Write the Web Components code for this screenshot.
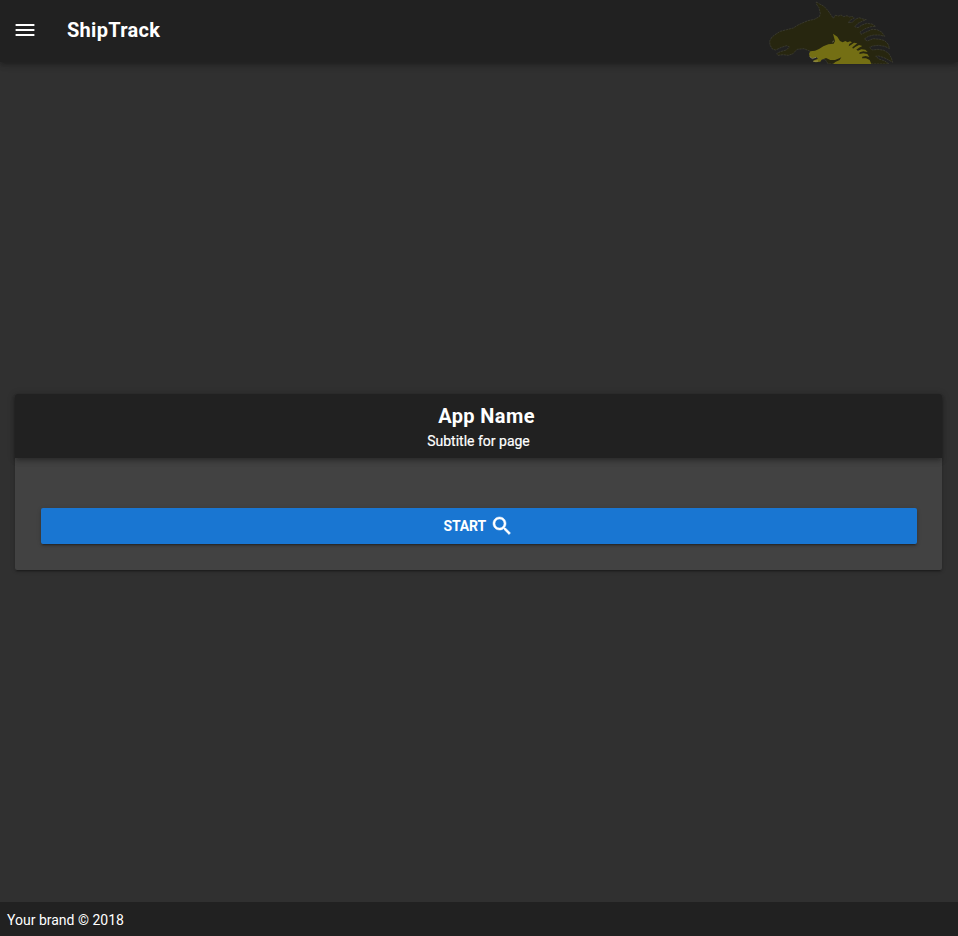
<!DOCTYPE html>
<html lang="en">
<head>
<meta charset="utf-8">
<title>ShipTrack</title>
<style>
html, body { margin: 0; height: 100%; background: #303030; }
body { overflow: hidden; font-family: Roboto, sans-serif; font-size: 14px; color: #fff; }
</style>
</head>
<body>
<ship-app></ship-app>
<script>
const define = (name, html) => {
  const template = document.createElement('template');
  template.innerHTML = html;
  customElements.define(name, class extends HTMLElement {
    constructor() {
      super();
      this.attachShadow({ mode: 'open' }).append(template.content.cloneNode(true));
    }
  });
};

define('menu-icon', `
<style>:host { display: block; width: 24px; height: 24px; } svg { display: block; }</style>
<svg width="24" height="24" viewBox="0 0 24 24" fill="#fff"><path d="M2.6 6h18.8v2H2.600zM2.600 11h18.800v2H2.600zM2.600 16h18.800v2H2.600z"/></svg>`);

define('search-icon', `
<style>:host { display: block; width: 24px; height: 24px; } svg { display: block; }</style>
<svg width="24" height="24" viewBox="0 0 24 24" fill="#fff" stroke="#fff" stroke-width=".5"><path d="M15.500 14h-.79l-.28-.27C15.410 12.590 16 11.110 16 9.500 16 5.910 13.090 3 9.500 3S3 5.910 3 9.500 5.910 16 9.500 16c1.610 0 3.090-.59 4.230-1.570l.27.28v.79l5 4.990L20.490 19l-4.990-5zm-6 0C7.010 14 5 11.990 5 9.500S7.010 5 9.500 5 14 7.010 14 9.500 11.990 14 9.500 14z"/></svg>`);

define('horse-logo', `
<style>:host { display: block; width: 140px; height: 64px; } svg { display: block; }</style>
<svg width="140" height="64" viewBox="0 0 420 192">
  <path fill="#27260f" stroke="#424238" stroke-width="2" stroke-dasharray="7 2" d="M169 6L179 12 192 19 204 32 213 45 220 55 226 46 236 48 243 45 251 50 261 47 268 51 276 49 283 54 273 59 264 68 277 67 286 58 297 53 309 57 319 59 308 63 294 70 284 80 294 83 306 75 320 70 336 72 347 79 333 80 315 86 300 96 303 103 318 96 336 88 351 89 365 96 374 109 358 105 341 105 325 109 313 117 322 123 340 116 360 118 374 122 384 132 389 146 374 139 355 136 337 138 329 142 337 150 354 148 372 151 386 160 394 174 398 187 386 180 372 173 356 168 347 169 357 177 374 183 387 192L205 192 195 178 174 174 153 164 149 153 132 146 111 148 99 161 85 166 69 164 54 166 50 161 61 155 79 150 88 141 80 137 64 142 47 150 37 147 30 135 29 123 36 111 48 102 61 94 80 89 100 84 114 75 127 69 144 62 163 58 178 50 181 41 177 23 169 12Z"/>
  <path fill="#746f14" d="M219 101L232 110 240 123 248 127 256 123 263 127 270 124 276 127 268 132 266 139 274 134 282 128 292 130 283 137 277 142 279 146 287 140 297 135 307 138 297 143 289 149 294 152 304 148 316 149 323 156 310 154 299 157 298 162 310 160 322 162 328 171 317 168 307 170 306 175 318 175 329 180 334 192L219 192 226 186 239 180 244 172 238 175 225 180 211 180 198 174 185 179 181 185 167 187 158 184 164 180 174 176 169 172 157 175 149 170 147 161 151 154 165 152 177 147 190 139 205 133 221 131 225 123Z"/>
  <path fill="none" stroke="#bab48a" stroke-width="1.500" d="M149 170L157 176 168 172 M160 184L174 183 M221 122L218 127"/>
</svg>`);

define('app-bar', `
<style>
:host { display: flex; box-sizing: border-box; height: 62px; padding: 0 58px 2px 13px; align-items: center; flex: none;
  background: #212121; box-shadow: 0 2px 4px -1px rgba(0,0,0,.2), 0 4px 5px rgba(0,0,0,.14), 0 1px 10px rgba(0,0,0,.12); z-index: 1; }
h1 { margin: 0 0 0 30px; font-size: 20px; line-height: 28px; font-weight: 700; letter-spacing: .3px; }
horse-logo { margin-left: auto; align-self: flex-start; }
</style>
<menu-icon></menu-icon><h1><slot></slot></h1><horse-logo></horse-logo>`);

define('start-button', `
<style>
:host { display: block; }
button { display: flex; align-items: center; justify-content: center; width: 100%; height: 36px; margin: 0; padding: 0 1px 0 0; border: 0; border-radius: 2px;
  font: 700 14px Roboto, sans-serif; letter-spacing: -.1px; color: #fff; background: #1976d2;
  box-shadow: 0 3px 1px -2px rgba(0,0,0,.2), 0 2px 2px rgba(0,0,0,.14), 0 1px 5px rgba(0,0,0,.12); }
search-icon { margin-left: 3.500px; }
</style>
<button><slot></slot><search-icon></search-icon></button>`);

define('title-card', `
<style>
:host { display: block; border-radius: 2px; background: #424242;
  box-shadow: 0 3px 1px -2px rgba(0,0,0,.2), 0 2px 2px rgba(0,0,0,.14), 0 1px 5px rgba(0,0,0,.12); }
header { box-sizing: border-box; height: 64px; padding-top: 8px; display: flex; flex-direction: column; align-items: center;
  background: #212121; border-radius: 2px 2px 0 0; box-shadow: 0 2px 4px -1px rgba(0,0,0,.2), 0 4px 5px rgba(0,0,0,.14), 0 1px 10px rgba(0,0,0,.12); }
.title { font-size: 20px; line-height: 28px; font-weight: 700; letter-spacing: .4px; padding-left: 16px; }
.subtitle { font-size: 14px; line-height: 22px; -webkit-text-stroke: .2px #fff; }
.body { padding: 50px 25px 26px 26px; }
</style>
<header><div class="title"><slot name="title"></slot></div><div class="subtitle"><slot name="subtitle"></slot></div></header>
<div class="body"><slot></slot></div>`);

define('app-footer', `
<style>:host { display: flex; flex: none; box-sizing: border-box; height: 34px; padding: 2px 7px 0; align-items: center; background: #212121; font-size: 14px; }</style>
<span><slot></slot></span>`);

define('ship-app', `
<style>
:host { display: flex; flex-direction: column; height: 100vh; min-height: 0; }
main { flex: 1; display: flex; align-items: center; padding: 0 16px 0 15px; }
title-card { flex: 1; }
</style>
<app-bar>ShipTrack</app-bar>
<main><title-card><span slot="title">App Name</span><span slot="subtitle">Subtitle for page</span><start-button>START</start-button></title-card></main>
<app-footer>Your brand © 2018</app-footer>`);
</script>
</body>
</html>
